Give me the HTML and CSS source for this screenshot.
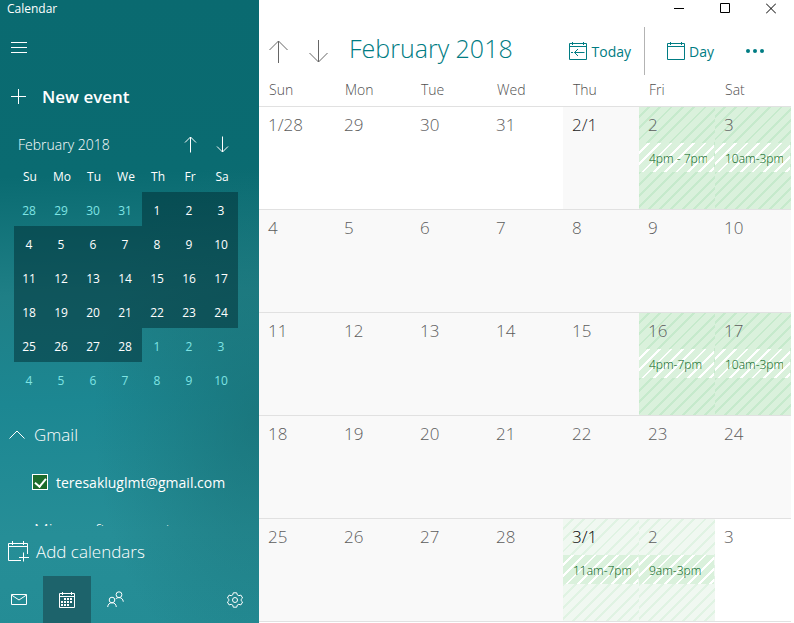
FILE: index.html
```
<!DOCTYPE html>
<html lang="en">
<head>
    <meta charset="UTF-8">
    <meta name="viewport" content="width=device-width, initial-scale=1.0">
    <title>Calendar</title>
    <link rel="stylesheet" href="styles.css">
</head>
<body>
    <aside class="sidebar">
        <div class="app-title">Calendar</div>
        <button type="button" class="menu-button" aria-label="Menu">
            <svg width="16" height="12" viewBox="0 0 16 12"><path d="M0 .5h16M0 5.5h16M0 10.5h16"/></svg>
        </button>
        <button type="button" class="new-event">
            <svg width="15" height="15" viewBox="0 0 15 15"><path d="M0 7.5h15M7.5 0v15"/></svg>
            New event
        </button>

        <section class="mini">
            <div class="mini-header">
                <span class="mini-title">February 2018</span>
                <button type="button" aria-label="Previous month">
                    <svg width="13" height="17" viewBox="0 0 13 17"><path d="M6.5 16.5V1M1 6.5L6.5 1 12 6.5"/></svg>
                </button>
                <button type="button" aria-label="Next month">
                    <svg width="13" height="17" viewBox="0 0 13 17"><path d="M6.5 .5V16M1 10.5L6.5 16l5.5-5.5"/></svg>
                </button>
            </div>
            <table class="mini-table">
                <thead>
                    <tr><th>Su</th><th>Mo</th><th>Tu</th><th>We</th><th>Th</th><th>Fr</th><th>Sa</th></tr>
                </thead>
                <tbody>
                    <tr><td>28</td><td>29</td><td>30</td><td>31</td><td class="in">1</td><td class="in">2</td><td class="in">3</td></tr>
                    <tr><td class="in">4</td><td class="in">5</td><td class="in">6</td><td class="in">7</td><td class="in">8</td><td class="in">9</td><td class="in">10</td></tr>
                    <tr><td class="in">11</td><td class="in">12</td><td class="in">13</td><td class="in">14</td><td class="in">15</td><td class="in">16</td><td class="in">17</td></tr>
                    <tr><td class="in">18</td><td class="in">19</td><td class="in">20</td><td class="in">21</td><td class="in">22</td><td class="in">23</td><td class="in">24</td></tr>
                    <tr><td class="in">25</td><td class="in">26</td><td class="in">27</td><td class="in">28</td><td>1</td><td>2</td><td>3</td></tr>
                    <tr><td>4</td><td>5</td><td>6</td><td>7</td><td>8</td><td>9</td><td>10</td></tr>
                </tbody>
            </table>
        </section>

        <section class="accounts">
            <button type="button" class="account-toggle">
                <svg width="16" height="9" viewBox="0 0 16 9"><path d="M.5 8.5L8 1l7.5 7.5"/></svg>
                Gmail
            </button>
            <label class="account" for="gmail">
                <input type="checkbox" id="gmail" checked>
                teresakluglmt@gmail.com
            </label>
            <div class="account-name">Microsoft account</div>
        </section>

        <button type="button" class="add-calendars">
            <svg width="21" height="21" viewBox="0 0 21 21"><path d="M13 19.5H.5V2.5h19V13M.5 5.5h19M4.5 0v4M15.5 0v4M15.5 11.5v9M11 16.5h10"/></svg>
            Add calendars
        </button>

        <nav class="app-bar">
            <a href="#" aria-label="Mail">
                <svg width="16" height="11" viewBox="0 0 16 11"><path d="M.5.5h15v10H.5zM.5 1L8 6l7.5-5"/></svg>
            </a>
            <a href="#" class="active" aria-label="Calendar">
                <svg width="16" height="16" viewBox="0 0 16 16"><path d="M.5 1.5h15v14H.5zM.5 4.5h15M3.5 0v3M12.5 0v3"/><path class="dots" d="M5 6h2v2H5zM8 6h2v2H8zM11 6h2v2h-2zM2 9h2v2H2zM5 9h2v2H5zM8 9h2v2H8zM11 9h2v2h-2zM2 12h2v2H2zM5 12h2v2H5zM8 12h2v2H8z"/></svg>
            </a>
            <a href="#" aria-label="People">
                <svg width="17" height="17" viewBox="0 0 17 17"><circle cx="5" cy="9" r="2.8"/><path d="M.7 16c.2-2.8 1.8-4.2 4.3-4.2S9.1 13.2 9.3 16"/><circle cx="12" cy="3.7" r="2.9"/><path d="M8.5 8.2c.9-1.1 2-1.6 3.5-1.6 2.5 0 4 1.5 4.3 4.1"/></svg>
            </a>
            <a href="#" class="settings" aria-label="Settings">
                <svg width="16" height="16" viewBox="0 0 16 16"><path d="M6.3.8h3.4l.6 2.1 1.5.8 2.1-.6 1.7 2.9L14 7.5v1l1.6 1.5-1.7 2.9-2.1-.6-1.5.8-.6 2.1H6.3l-.6-2.1-1.5-.8-2.1.6L.4 10 2 8.5v-1L.4 6l1.7-2.9 2.1.6 1.5-.8z"/><circle cx="8" cy="8" r="2.5"/></svg>
            </a>
        </nav>
    </aside>

    <main class="main">
        <div class="window-controls">
            <button type="button" aria-label="Minimize"><svg width="10" height="11" viewBox="0 0 10 11"><path d="M0 5.5h10"/></svg></button>
            <button type="button" aria-label="Maximize"><svg width="10" height="11" viewBox="0 0 10 11"><path d="M.5.5h9v9h-9z"/></svg></button>
            <button type="button" aria-label="Close"><svg width="10" height="11" viewBox="0 0 10 11"><path d="M0 .5l10 10M10 .5l-10 10"/></svg></button>
        </div>

        <header class="toolbar">
            <button type="button" class="arrow" aria-label="Previous">
                <svg width="20" height="23" viewBox="0 0 20 23"><path d="M9.5 23V1M.5 10l9-9 9 9"/></svg>
            </button>
            <button type="button" class="arrow" aria-label="Next">
                <svg width="20" height="23" viewBox="0 0 20 23"><path d="M9.5 0v22M.5 13l9 9 9-9"/></svg>
            </button>
            <h1>February 2018</h1>
            <button type="button" class="command today">
                <svg width="18" height="18" viewBox="0 0 18 18"><path d="M.5 1.5h17v16H.5zM.5 4.5h17M3.5 0v3M14.5 0v3M5.5 10.5h10M9 7l-3.5 3.5L9 14M2 10.5h2"/></svg>
                Today
            </button>
            <button type="button" class="command day">
                <svg width="18" height="18" viewBox="0 0 18 18"><path d="M.5 1.5h17v16H.5zM.5 4.5h17M3.5 0v3M14.5 0v3"/></svg>
                Day
            </button>
            <button type="button" class="more" aria-label="More">
                <svg width="18" height="4" viewBox="0 0 18 4"><circle cx="2" cy="2" r="2"/><circle cx="9" cy="2" r="2"/><circle cx="16" cy="2" r="2"/></svg>
            </button>
        </header>

        <table class="month">
            <thead>
                <tr><th>Sun</th><th>Mon</th><th>Tue</th><th>Wed</th><th>Thu</th><th>Fri</th><th>Sat</th></tr>
            </thead>
            <tbody>
                <tr>
                    <td class="other">1/28</td>
                    <td class="other">29</td>
                    <td class="other">30</td>
                    <td class="other">31</td>
                    <td class="first">2/1</td>
                    <td class="busy">2<div class="event"><span>4pm - 7pm</span></div></td>
                    <td class="busy">3<div class="event"><span>10am-3pm</span></div></td>
                </tr>
                <tr><td>4</td><td>5</td><td>6</td><td>7</td><td>8</td><td>9</td><td>10</td></tr>
                <tr>
                    <td>11</td>
                    <td>12</td>
                    <td>13</td>
                    <td>14</td>
                    <td>15</td>
                    <td class="busy">16<div class="event"><span>4pm-7pm</span></div></td>
                    <td class="busy">17<div class="event"><span>10am-3pm</span></div></td>
                </tr>
                <tr><td>18</td><td>19</td><td>20</td><td>21</td><td>22</td><td>23</td><td>24</td></tr>
                <tr>
                    <td>25</td>
                    <td>26</td>
                    <td>27</td>
                    <td>28</td>
                    <td class="busy other next-first">3/1<div class="event"><span>11am-7pm</span></div></td>
                    <td class="busy other">2<div class="event"><span>9am-3pm</span></div></td>
                    <td class="other">3</td>
                </tr>
            </tbody>
        </table>
    </main>
</body>
</html>
```
FILE: styles.css
```
* {
    box-sizing: border-box;
}
body {
    margin: 0;
    display: flex;
    height: 100vh;
    overflow: hidden;
    font-family: "Open Sans", "Noto Sans", sans-serif;
    background: #fff;
}
button {
    display: flex;
    align-items: center;
    padding: 0;
    border: none;
    background: none;
    color: inherit;
    font: inherit;
    cursor: pointer;
}
svg {
    flex: none;
    fill: none;
    stroke: currentColor;
}

/* Sidebar */
.sidebar {
    flex: none;
    display: flex;
    flex-direction: column;
    width: 259px;
    color: #fff;
    background:
        radial-gradient(ellipse at 100% 67%, rgba(24, 108, 112, 0.6), transparent 45%),
        linear-gradient(178deg, #0a6a70 0%, #0a6b71 28%, #1f7f86 47%, #1c8792 64%, #268e97 85%, #248c95 100%);
}
.app-title {
    padding-left: 7px;
    font-size: 12px;
    line-height: 17px;
}
.menu-button {
    height: 48px;
    margin-top: 7px;
    padding-left: 11px;
}
.new-event {
    gap: 16px;
    height: 48px;
    padding-left: 11px;
    font-size: 17px;
    font-weight: 600;
}
.mini {
    padding: 8px 21px 0 14px;
}
.mini-header {
    display: flex;
    align-items: center;
    height: 32px;
    padding-left: 4px;
    font-size: 14px;
}
.mini-title {
    flex: 1;
    font-weight: 350;
}
.mini-header button {
    justify-content: center;
    width: 32px;
    height: 32px;
}
.mini-table {
    width: 100%;
    table-layout: fixed;
    border-collapse: collapse;
    font-size: 12px;
    text-align: center;
}
.mini-table th {
    height: 32px;
    padding: 0;
    font-weight: 400;
}
.mini-table td {
    height: 34px;
    padding: 2px 2px 0 0;
    color: #7fe4e4;
}
.mini-table .in {
    color: #fff;
    background: rgba(0, 44, 50, 0.5);
}
.accounts {
    flex: 1;
    min-height: 0;
    overflow: hidden;
    padding-top: 14px;
}
.account-toggle {
    gap: 9px;
    height: 48px;
    padding-left: 9px;
    font-size: 17px;
    font-weight: 350;
}
.account {
    display: flex;
    align-items: center;
    gap: 8px;
    height: 48px;
    padding-left: 32px;
    font-size: 14px;
}
.account input {
    appearance: none;
    display: flex;
    justify-content: center;
    flex: none;
    width: 16px;
    height: 16px;
    margin: 0;
    padding-top: 1px;
    border: 1px solid #fff;
    background: #1d6b2c;
}
.account input:checked::after {
    content: "";
    width: 5px;
    height: 9px;
    border: solid #fff;
    border-width: 0 2px 2px 0;
    transform: rotate(40deg);
}
.account-name {
    padding: 12px 0 0 34px;
    font-size: 17px;
    font-weight: 350;
}
.add-calendars {
    flex: none;
    gap: 7px;
    height: 50px;
    padding-left: 8px;
    font-size: 17px;
    font-weight: 350;
}
.app-bar {
    flex: none;
    display: flex;
    height: 47px;
}
.app-bar a {
    display: flex;
    align-items: center;
    justify-content: center;
    width: 48px;
    color: #fff;
}
.app-bar a:first-child {
    width: 43px;
    padding-right: 5px;
}
.app-bar .active {
    background: #1d636b;
}
.app-bar .settings {
    margin-left: auto;
}
.dots {
    fill: currentColor;
    stroke: none;
}

/* Main view */
.main {
    flex: 1;
    min-width: 0;
}
.window-controls {
    display: flex;
    justify-content: flex-end;
    height: 17px;
    color: #000;
}
.window-controls button {
    justify-content: center;
    width: 46px;
}
.toolbar {
    display: flex;
    align-items: center;
    height: 68px;
    padding: 0 30px 0 10px;
    color: #007c83;
}
.arrow {
    width: 20px;
    margin-right: 20px;
    color: #666;
}
h1 {
    flex: 1;
    margin: 0;
    padding-bottom: 6px;
    font-size: 25px;
    font-weight: 300;
    line-height: 32px;
    white-space: nowrap;
}
.command {
    height: 48px;
    font-size: 14px;
}
.today {
    gap: 5px;
    padding-right: 13px;
    border-right: 1px solid #b3b3b3;
}
.day {
    gap: 4px;
    padding-left: 22px;
}
.more {
    height: 48px;
    margin-left: 32px;
}
.more svg {
    fill: currentColor;
    stroke: none;
}
.month {
    width: calc(100% - 3px);
    table-layout: fixed;
    border-spacing: 0;
    border-bottom: 1px solid #e1e1e1;
    color: #5c5c5c;
    text-align: left;
}
.month th {
    height: 21px;
    padding: 0 0 11px 10px;
    font-size: 14px;
    font-weight: 350;
    line-height: 10px;
    color: #505050;
}
.month td {
    height: 103px;
    padding: 6px 0 0 9px;
    border-top: 1px solid #e1e1e1;
    background: #f9f9f9;
    font-size: 17px;
    font-weight: 350;
    line-height: 24px;
    vertical-align: top;
}
.month .other {
    background: #fff;
}
.month .first {
    color: #222;
}
.month .next-first {
    color: #000;
}
.month .busy {
    background: repeating-linear-gradient(135deg, #daf1dc 0 6px, #c6eacc 6px 8px);
    background-clip: padding-box;
}
.month .busy.other {
    background: repeating-linear-gradient(135deg, #f0f8f1 0 6px, #e0f3e3 6px 8px);
    background-clip: padding-box;
}
.event {
    height: 29px;
    margin: 6px 1px 0 -9px;
    padding: 0 7px 0 10px;
    background: repeating-linear-gradient(135deg, #daf1dc 0 6px, #fff 6px 8px);
    color: #005c14;
    font-size: 12px;
    font-weight: 350;
    line-height: 32px;
    white-space: nowrap;
}
.event span {
    display: block;
    overflow: hidden;
}
```
